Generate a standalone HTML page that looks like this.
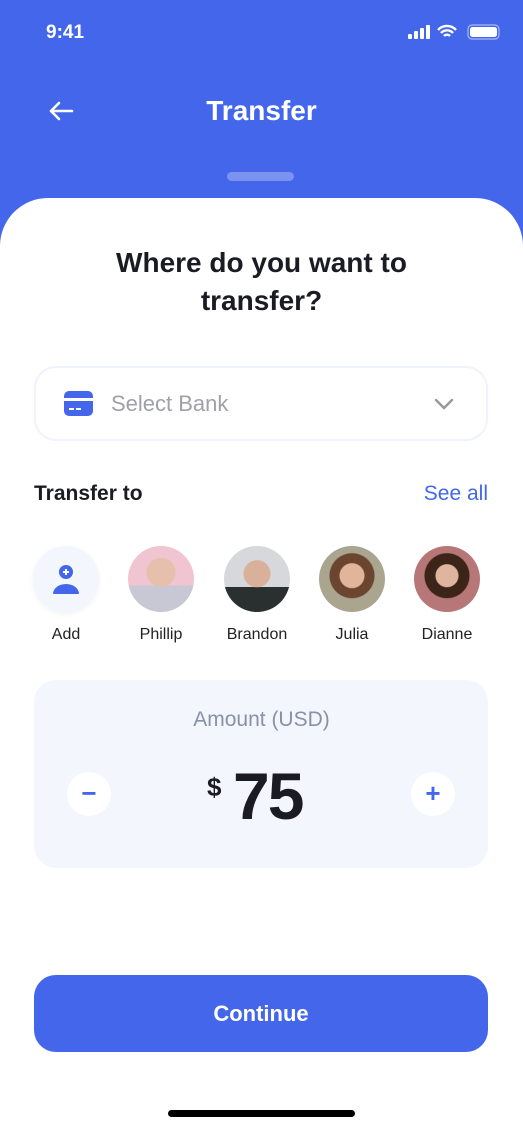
<!DOCTYPE html>
<html><head><style>
*{margin:0;padding:0;box-sizing:border-box}
body{width:523px;height:1131px;background:#4466eb;font-family:"Liberation Sans",sans-serif;position:relative;overflow:hidden}
.abs{position:absolute}
.card{left:0;top:198px;width:523px;height:933px;background:#fff;border-radius:48px 48px 0 0}
.t{color:#1b1b24}
.av{width:66px;height:66px;border-radius:50%;top:546px;overflow:hidden}
.nm{top:626px;font-size:16px;color:#222;width:100px;text-align:center}
</style></head><body>
<div class="abs" style="left:46px;top:22px;color:#fff;font-size:19px;font-weight:bold">9:41</div>
<svg class="abs" style="left:408px;top:24px" width="95" height="16">
<rect x="0" y="10" width="4" height="5" rx="1" fill="#fff"/><rect x="6" y="7" width="4" height="8" rx="1" fill="#fff"/><rect x="12" y="4" width="4" height="11" rx="1" fill="#fff"/><rect x="18" y="1" width="4" height="14" rx="1" fill="#fff"/>
<path d="M30 6a12 12 0 0 1 18 0M33 9a8 8 0 0 1 12 0M36 12a4 4 0 0 1 6 0" stroke="#fff" stroke-width="2.4" fill="none"/>
<rect x="60" y="1" width="31" height="14" rx="4" fill="none" stroke="#aab9f5" stroke-width="1.2"/><rect x="62" y="3" width="27" height="10" rx="2.5" fill="#fff"/>
</svg>
<svg class="abs" style="left:48px;top:100px" width="26" height="22"><path d="M24 11H3M11 3L3 11l8 8" stroke="#fff" stroke-width="2.6" fill="none" stroke-linecap="round" stroke-linejoin="round"/></svg>
<div class="abs" style="left:0;width:523px;top:95px;text-align:center;color:#fff;font-size:28px;font-weight:bold">Transfer</div>
<div class="abs" style="left:227px;top:172px;width:67px;height:9px;border-radius:5px;background:#7b92f0"></div>
<div class="abs card"></div>
<div class="abs t" style="left:0;width:523px;top:244px;text-align:center;font-size:28px;font-weight:bold;line-height:38px">Where do you want to<br>transfer?</div>
<div class="abs" style="left:34px;top:366px;width:454px;height:75px;border:2px solid #f0f2fc;border-radius:22px"></div>
<svg class="abs" style="left:64px;top:391px" width="29" height="25"><rect width="29" height="25" rx="5" fill="#4466eb"/><rect x="0" y="7" width="29" height="3" fill="#fff"/><rect x="5" y="17" width="5" height="2" fill="#fff"/><rect x="12" y="17" width="5" height="2" fill="#fff"/></svg>
<div class="abs" style="left:111px;top:391px;font-size:22px;color:#a0a0a8">Select Bank</div>
<svg class="abs" style="left:434px;top:398px" width="20" height="12"><path d="M2 2l8 8 8-8" stroke="#999" stroke-width="2.4" fill="none" stroke-linecap="round"/></svg>
<div class="abs t" style="left:34px;top:482px;font-size:21px;font-weight:bold">Transfer to</div>
<div class="abs" style="right:35px;top:482px;font-size:21px;color:#4466eb">See all</div>
<div class="abs av" style="left:33px;background:#f3f6fd;box-shadow:0 2px 6px rgba(0,0,0,.05)"><svg width="66" height="66"><circle cx="33" cy="26" r="7" fill="#4466eb"/><path d="M30 26h6M33 23v6" stroke="#fff" stroke-width="2"/><path d="M20 48a13 10 0 0 1 26 0z" fill="#4466eb"/></svg></div>
<div class="abs nm" style="left:16px">Add</div>
<div class="abs av" style="left:128px;background:radial-gradient(circle at 50% 40%,#e6c0ad 0 14px,transparent 15px),linear-gradient(#f0c4d0 60%,#c8c8d4 60%)"></div>
<div class="abs nm" style="left:111px">Phillip</div>
<div class="abs av" style="left:224px;background:radial-gradient(circle at 50% 42%,#d9b09a 0 13px,transparent 14px),linear-gradient(#d6d8dc 62%,#2a2f30 62%)"></div>
<div class="abs nm" style="left:207px">Brandon</div>
<div class="abs av" style="left:319px;background:radial-gradient(circle at 50% 45%,#e2b499 0 12px,#6b4530 13px 22px,transparent 23px),#a9a58f"></div>
<div class="abs nm" style="left:302px">Julia</div>
<div class="abs av" style="left:414px;background:radial-gradient(circle at 50% 45%,#e0b5a0 0 11px,#3d2419 12px 22px,transparent 23px),#b77776"></div>
<div class="abs nm" style="left:397px">Dianne</div>
<div class="abs" style="left:34px;top:680px;width:454px;height:188px;background:#f3f6fd;border-radius:22px"></div>
<div class="abs" style="left:0;width:523px;top:708px;text-align:center;font-size:21px;color:#8a90a6">Amount (USD)</div>
<div class="abs" style="left:67px;top:772px;width:44px;height:44px;border-radius:50%;background:#fff;color:#4466eb;font-size:26px;text-align:center;line-height:42px;font-weight:bold">−</div>
<div class="abs" style="left:411px;top:772px;width:44px;height:44px;border-radius:50%;background:#fff;color:#4466eb;font-size:26px;text-align:center;line-height:42px;font-weight:bold">+</div>
<div class="abs t" style="left:207px;top:772px;font-size:26px;font-weight:bold">$</div>
<div class="abs t" style="left:233px;top:758px;font-size:66px;font-weight:bold;letter-spacing:-2px">75</div>
<div class="abs" style="left:34px;top:975px;width:454px;height:77px;background:#4466eb;border-radius:22px;color:#fff;font-size:22px;font-weight:bold;text-align:center;line-height:77px">Continue</div>
<div class="abs" style="left:168px;top:1110px;width:187px;height:7px;border-radius:4px;background:#000"></div>
</body></html>
